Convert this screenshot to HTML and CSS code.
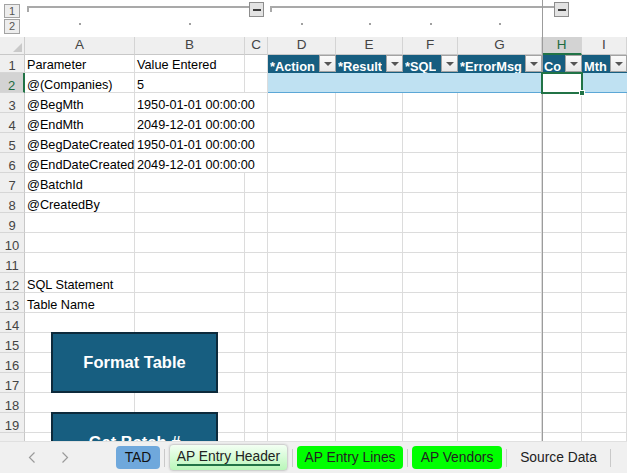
FILE: index.html
```html
<!DOCTYPE html>
<html>
<head>
<meta charset="utf-8">
<link rel="stylesheet" href="styles.css">
</head>
<body>
<div class="workbook">
  <div class="outline">
    <div class="levels"><span class="lvl l1">1</span><span class="lvl l2">2</span></div>
    <div class="group g1"><span class="gline"></span><span class="gbtn"></span></div>
    <div class="group g2"><span class="gline"></span><span class="gbtn"></span></div>
    <span class="dot cA"></span><span class="dot cB"></span><span class="dot cD"></span>
    <span class="dot cE"></span><span class="dot cF"></span><span class="dot cG"></span>
  </div>
  <div class="sheet">
    <div class="row hdr"><div class="corner"></div><div class="ch">A</div><div class="ch">B</div><div class="ch">C</div><div class="ch">D</div><div class="ch">E</div><div class="ch">F</div><div class="ch">G</div><div class="ch csel">H</div><div class="ch">I</div></div>
    <div class="row r1"><div class="rh">1</div><div class="cell">Parameter</div><div class="cell">Value Entered</div><div class="cell"></div>
      <div class="th"><span>*Action</span><span class="dd"></span></div>
      <div class="th"><span>*Result</span><span class="dd"></span></div>
      <div class="th"><span>*SQL</span><span class="dd"></span></div>
      <div class="th"><span>*ErrorMsg</span><span class="dd"></span></div>
      <div class="th"><span>Co</span><span class="dd"></span></div>
      <div class="th"><span>Mth</span><span class="dd"></span></div></div>
    <div class="row"><div class="rh rsel">2</div><div class="cell">@(Companies)</div><div class="cell">5</div><div class="cell"></div><div class="tb"></div><div class="tb"></div><div class="tb"></div><div class="tb"></div><div class="tb active-cell"></div><div class="tb"></div></div>
    <div class="row"><div class="rh">3</div><div class="cell">@BegMth</div><div class="cell span2">1950-01-01 00:00:00</div><div class="cell"></div><div class="cell"></div><div class="cell"></div><div class="cell"></div><div class="cell"></div><div class="cell"></div></div>
    <div class="row"><div class="rh">4</div><div class="cell">@EndMth</div><div class="cell span2">2049-12-01 00:00:00</div><div class="cell"></div><div class="cell"></div><div class="cell"></div><div class="cell"></div><div class="cell"></div><div class="cell"></div></div>
    <div class="row"><div class="rh">5</div><div class="cell">@BegDateCreated</div><div class="cell span2">1950-01-01 00:00:00</div><div class="cell"></div><div class="cell"></div><div class="cell"></div><div class="cell"></div><div class="cell"></div><div class="cell"></div></div>
    <div class="row"><div class="rh">6</div><div class="cell">@EndDateCreated</div><div class="cell span2">2049-12-01 00:00:00</div><div class="cell"></div><div class="cell"></div><div class="cell"></div><div class="cell"></div><div class="cell"></div><div class="cell"></div></div>
    <div class="row"><div class="rh">7</div><div class="cell">@BatchId</div><div class="cell"></div><div class="cell"></div><div class="cell"></div><div class="cell"></div><div class="cell"></div><div class="cell"></div><div class="cell"></div><div class="cell"></div></div>
    <div class="row"><div class="rh">8</div><div class="cell">@CreatedBy</div><div class="cell"></div><div class="cell"></div><div class="cell"></div><div class="cell"></div><div class="cell"></div><div class="cell"></div><div class="cell"></div><div class="cell"></div></div>
    <div class="row"><div class="rh">9</div><div class="cell"></div><div class="cell"></div><div class="cell"></div><div class="cell"></div><div class="cell"></div><div class="cell"></div><div class="cell"></div><div class="cell"></div><div class="cell"></div></div>
    <div class="row"><div class="rh">10</div><div class="cell"></div><div class="cell"></div><div class="cell"></div><div class="cell"></div><div class="cell"></div><div class="cell"></div><div class="cell"></div><div class="cell"></div><div class="cell"></div></div>
    <div class="row"><div class="rh">11</div><div class="cell"></div><div class="cell"></div><div class="cell"></div><div class="cell"></div><div class="cell"></div><div class="cell"></div><div class="cell"></div><div class="cell"></div><div class="cell"></div></div>
    <div class="row"><div class="rh">12</div><div class="cell">SQL Statement</div><div class="cell"></div><div class="cell"></div><div class="cell"></div><div class="cell"></div><div class="cell"></div><div class="cell"></div><div class="cell"></div><div class="cell"></div></div>
    <div class="row"><div class="rh">13</div><div class="cell">Table Name</div><div class="cell"></div><div class="cell"></div><div class="cell"></div><div class="cell"></div><div class="cell"></div><div class="cell"></div><div class="cell"></div><div class="cell"></div></div>
    <div class="row"><div class="rh">14</div><div class="cell"></div><div class="cell"></div><div class="cell"></div><div class="cell"></div><div class="cell"></div><div class="cell"></div><div class="cell"></div><div class="cell"></div><div class="cell"></div></div>
    <div class="row"><div class="rh">15</div><div class="cell"></div><div class="cell"></div><div class="cell"></div><div class="cell"></div><div class="cell"></div><div class="cell"></div><div class="cell"></div><div class="cell"></div><div class="cell"></div></div>
    <div class="row"><div class="rh">16</div><div class="cell"></div><div class="cell"></div><div class="cell"></div><div class="cell"></div><div class="cell"></div><div class="cell"></div><div class="cell"></div><div class="cell"></div><div class="cell"></div></div>
    <div class="row"><div class="rh">17</div><div class="cell"></div><div class="cell"></div><div class="cell"></div><div class="cell"></div><div class="cell"></div><div class="cell"></div><div class="cell"></div><div class="cell"></div><div class="cell"></div></div>
    <div class="row"><div class="rh">18</div><div class="cell"></div><div class="cell"></div><div class="cell"></div><div class="cell"></div><div class="cell"></div><div class="cell"></div><div class="cell"></div><div class="cell"></div><div class="cell"></div></div>
    <div class="row"><div class="rh">19</div><div class="cell"></div><div class="cell"></div><div class="cell"></div><div class="cell"></div><div class="cell"></div><div class="cell"></div><div class="cell"></div><div class="cell"></div><div class="cell"></div></div>
    <div class="row"><div class="rh">20</div><div class="cell"></div><div class="cell"></div><div class="cell"></div><div class="cell"></div><div class="cell"></div><div class="cell"></div><div class="cell"></div><div class="cell"></div><div class="cell"></div></div>

    <div class="shape btn-format">Format Table</div>
    <div class="shape btn-batch">Get Batch #</div>
    <div class="selection"><span class="handle"></span></div>
  </div>
  <div class="freeze"></div>
</div>
<div class="tabbar">
  <div class="nav">
    <svg width="8" height="11" viewBox="0 0 8 11"><path d="M6.5 0.5 L1.5 5.5 L6.5 10.5" fill="none" stroke="#9a9a9a" stroke-width="1.2"/></svg>
    <svg width="8" height="11" viewBox="0 0 8 11"><path d="M1.5 0.5 L6.5 5.5 L1.5 10.5" fill="none" stroke="#9a9a9a" stroke-width="1.2"/></svg>
  </div>
  <div class="tab tad">TAD</div>
  <span class="sep"></span>
  <div class="tab current">AP Entry Header</div>
  <span class="sep"></span>
  <div class="tab green lines">AP Entry Lines</div>
  <span class="sep"></span>
  <div class="tab green vendors">AP Vendors</div>
  <span class="sep"></span>
  <div class="tab source">Source Data</div>
  <span class="sep"></span>
</div>
</body>
</html>
```
FILE: styles.css
```css
:root {
  --cols: 25px 110px 110px 23px 68px 67px 55px 84px 40px 45px;
  --grid: #dcdcdc;
  --navy: #175e80;
}
* { box-sizing: border-box; }
html, body { margin: 0; padding: 0; }
body {
  width: 627px;
  height: 473px;
  overflow: hidden;
  background: #fff;
  font-family: "Liberation Sans", Arial, sans-serif;
  display: flex;
  flex-direction: column;
}
.workbook {
  position: relative;
  height: 441px;
  flex: none;
  overflow: hidden;
}

/* outline area */
.outline {
  height: 37px;
  display: grid;
  grid-template-columns: var(--cols);
  grid-template-rows: 18px 19px;
}
.levels {
  grid-column: 1;
  grid-row: 1 / 3;
  display: flex;
  flex-direction: column;
  padding: 4px 0 0 4px;
  gap: 1px;
}
.lvl {
  width: 16px;
  border: 1px solid #a3a3a3;
  background: #ededed;
  color: #555;
  font-size: 11px;
  text-align: center;
}
.l1 { height: 14px; line-height: 12px; }
.l2 { height: 15px; line-height: 13px; }
.group {
  grid-row: 1;
  display: flex;
  align-items: flex-start;
  padding-left: 2px;
}
.g1 { grid-column: 2 / 5; padding-right: 4px; }
.g2 { grid-column: 5 / 10; padding-right: 13px; }
.gline {
  flex: 1;
  height: 6px;
  margin-top: 6px;
  border-top: 2px solid #a9a9a9;
  border-left: 2px solid #a9a9a9;
}
.gbtn {
  width: 15px;
  height: 15px;
  margin-top: 2px;
  border: 1px solid #8d8d8d;
  background: #e3e3e3;
  display: flex;
  align-items: center;
  justify-content: center;
}
.gbtn::after {
  content: "";
  width: 8px;
  height: 2px;
  background: #3c3c3c;
}
.dot {
  grid-row: 2;
  justify-self: center;
  width: 2px;
  height: 2px;
  margin-top: 5px;
  background: #a0a0a0;
}
.cA { grid-column: 2; }
.cB { grid-column: 3; }
.cD { grid-column: 5; }
.cE { grid-column: 6; }
.cF { grid-column: 7; }
.cG { grid-column: 8; }

/* sheet grid */
.sheet { position: relative; }
.row {
  display: grid;
  grid-template-columns: var(--cols);
  height: 20px;
}
.row.hdr, .row.r1 { height: 18px; }
.corner {
  background: #efefef;
  border-right: 1px solid #cdcdcd;
  border-bottom: 1px solid #c8c8c8;
  position: relative;
}
.corner::after {
  content: "";
  position: absolute;
  right: 2px;
  bottom: 2px;
  border-left: 9px solid transparent;
  border-bottom: 9px solid #c9c9c9;
}
.ch {
  background: #efefef;
  border-right: 1px solid #d4d4d4;
  border-bottom: 1px solid #c8c8c8;
  color: #444;
  font-size: 13.5px;
  line-height: 15px;
  text-align: center;
}
.ch.csel {
  background: #d3d3d3;
  color: #1d6a3f;
  border-bottom: 2px solid #217346;
}
.rh {
  background: #efefef;
  border-right: 1px solid #c8c8c8;
  border-bottom: 1px solid #d6d6d6;
  color: #444;
  font-size: 13px;
  line-height: 13px;
  display: flex;
  align-items: flex-end;
  justify-content: center;
}
.rh.rsel {
  background: #d3d3d3;
  color: #1d6a3f;
  border-right: 2px solid #217346;
}
.cell {
  border-right: 1px solid var(--grid);
  border-bottom: 1px solid var(--grid);
  font-size: 12.7px;
  line-height: 13px;
  padding: 0 0 0 2px;
  display: flex;
  align-items: flex-end;
  white-space: nowrap;
  overflow: hidden;
  color: #000;
}
.cell.span2 { grid-column: span 2; }
.th {
  background: var(--navy);
  color: #fff;
  font-weight: bold;
  font-size: 12.8px;
  line-height: 13px;
  padding-left: 2px;
  display: flex;
  align-items: flex-end;
  justify-content: space-between;
  white-space: nowrap;
  overflow: hidden;
}
.th span:first-child { overflow: hidden; }
.dd {
  flex: none;
  align-self: flex-start;
  width: 17px;
  height: 17px;
  border: 1px solid #a3a3a3;
  background: linear-gradient(#fbfbfb, #e8e8e8);
  display: flex;
  align-items: center;
  justify-content: center;
}
.dd::after {
  content: "";
  border-left: 4px solid transparent;
  border-right: 4px solid transparent;
  border-top: 4px solid #555;
  margin-top: 1px;
}
.tb {
  background: #bfe1f2;
  border-bottom: 1px solid #5ba7d6;
}
.tb.active-cell { background: #fff; }

/* floating shapes */
.shape {
  position: absolute;
  left: 51px;
  width: 167px;
  height: 61px;
  background: var(--navy);
  border: 2px solid #0d2a3b;
  color: #fff;
  font-weight: bold;
  font-size: 16.5px;
  display: flex;
  align-items: center;
  justify-content: center;
}
.btn-format { top: 295px; }
.btn-batch { top: 375px; }
.selection {
  position: absolute;
  left: 541px;
  top: 35px;
  width: 42px;
  height: 22px;
  border: 2px solid #217346;
  z-index: 2;
}
.handle {
  position: absolute;
  right: -4px;
  bottom: -4px;
  width: 6px;
  height: 6px;
  background: #217346;
  border: 1px solid #fff;
}
.freeze {
  position: absolute;
  left: 542px;
  top: 0;
  width: 1px;
  height: 441px;
  background: #9c9c9c;
  z-index: 1;
}

/* sheet tabs */
.tabbar {
  height: 32px;
  flex: none;
  background: #f0f0f0;
  border-top: 1px solid #e0e0e0;
  display: flex;
  align-items: center;
  gap: 4px;
  font-size: 13.8px;
  color: #222;
}
.nav {
  width: 112px;
  flex: none;
  display: flex;
  align-items: center;
  padding-left: 28px;
  gap: 25px;
}
.nav svg { display: block; }
.tab {
  flex: none;
  height: 23px;
  border-radius: 4px;
  display: flex;
  align-items: center;
  justify-content: center;
  white-space: nowrap;
}
.tad { width: 44px; background: #6fa8dc; color: #111; }
.sep { flex: none; width: 1px; height: 18px; background: #c9c9c9; }
.current {
  width: 119px;
  height: 27px;
  position: relative;
  background: linear-gradient(#f3fff3, #b9f7b9);
  border: 1px solid #d0d0d0;
  box-shadow: 0 0 2px rgba(0, 0, 0, 0.15);
  padding-bottom: 3px;
}
.current::after {
  content: "";
  position: absolute;
  left: 7px;
  right: 7px;
  bottom: 4px;
  height: 2px;
  background: #217346;
}
.green { background: #00ff00; }
.lines { width: 106px; }
.vendors { width: 90px; }
.source { width: 95px; }
```
